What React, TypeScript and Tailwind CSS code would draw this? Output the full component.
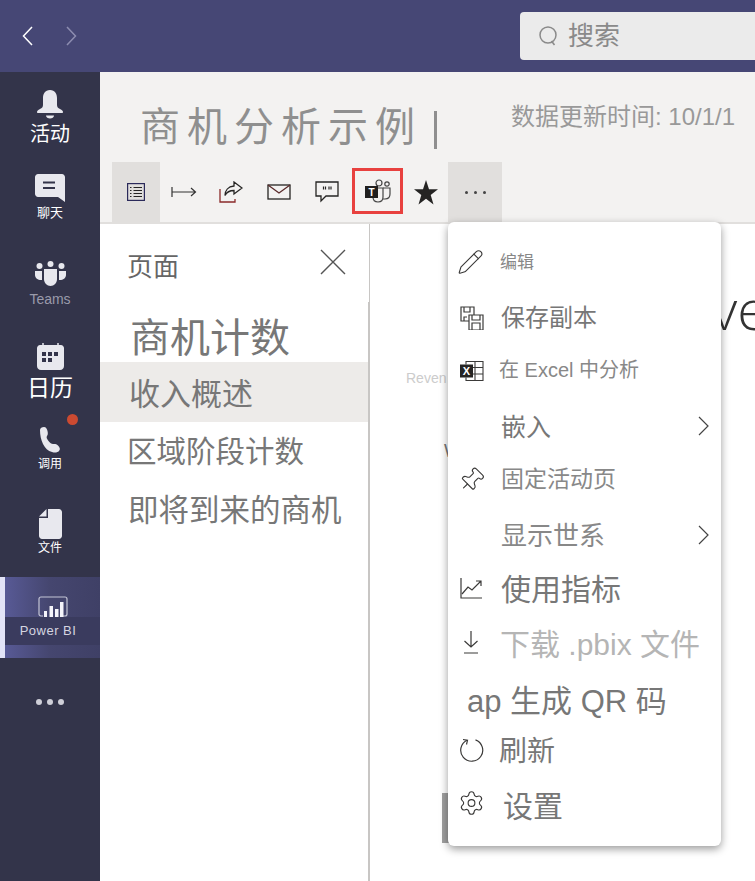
import React from 'react';
import { ChevronRight, Pencil, Pin, Settings } from 'lucide-react';

// Rail icons
const BellIcon = () => (
  <svg width="28" height="30" viewBox="0 0 28 30" fill="#e8e8ee">
    <path d="M14 1c-5 0-7 4-7 8v7c0 2-1 3-3 4-2 1-3 2-3 3 0 .6.4 1 1 1h24c.6 0 1-.4 1-1 0-1-1-2-3-3-2-1-3-2-3-4V9c0-4-2-8-7-8z" />
    <path d="M10 26.500h8c0 2-2 3-4 3s-4-1-4-3z" />
  </svg>
);

const ChatIcon = () => (
  <svg width="30" height="28" viewBox="0 0 30 28">
    <path d="M3 0h24c1.500 0 3 1.500 3 3v25l-7-5H3c-1.500 0-3-1.500-3-3V3c0-1.500 1.500-3 3-3z" fill="#e8e8ee" />
    <path d="M8 8.500h12M8 14h12" stroke="#33344a" strokeWidth="2" />
  </svg>
);

const TeamsIcon = () => (
  <svg width="31" height="25" viewBox="0 0 31 25" fill="#e8e8ee">
    <circle cx="4.500" cy="5" r="3" />
    <circle cx="15.500" cy="3" r="3" />
    <circle cx="26.500" cy="5" r="3" />
    <path d="M0 10h7v9h-1c-3 0-6-2-6-5zM24 10h7v4c0 3-3 5-6 5h-1z" />
    <path d="M9 8h13v10c0 4-3 7-6.500 7S9 22 9 18z" />
  </svg>
);

const CalendarIcon = () => (
  <svg width="27" height="27" viewBox="0 0 27 27">
    <path d="M3 2h21c1.500 0 3 1.500 3 3v18c0 2-1.500 4-4 4H4c-2.500 0-4-2-4-4V5c0-1.500 1.500-3 3-3z" fill="#e8e8ee" />
    <path d="M6 0v3M21 0v3" stroke="#e8e8ee" strokeWidth="1.500" />
    <path d="M5 9h4v4H5zM11 9h4v4h-4zM17 9h4v4h-4zM5 15h4v4H5zM11 15h4v4h-4z" fill="#33344a" />
  </svg>
);

const PhoneIcon = () => (
  <svg width="22" height="26" viewBox="0 0 22 26" fill="#e8e8ee">
    <path d="M1 3c0-2 2-3 4-3 2 0 3 2 3.500 4 .5 2 .5 4-.5 5-1 1 0 3 1.500 5 1.500 2 3 3 4.500 3 1.500 0 3-.5 5 1.500 2 2 2.500 4 1 5.500-1.500 1.500-4 2-7 1-4-1-7-4-9-8C2 13 1 8 1 3z" />
  </svg>
);

const FileIcon = () => (
  <svg width="23" height="30" viewBox="0 0 23 30">
    <path d="M9 0h11c1.500 0 3 1.500 3 3v24c0 1.500-1.500 3-3 3H3c-1.500 0-3-1.500-3-3V9h9z" fill="#e8e8ee" />
    <path d="M7.500 0v7.500H0z" fill="#e8e8ee" />
  </svg>
);

const PowerBiIcon = () => (
  <svg width="30" height="21" viewBox="0 0 30 21" fill="none" className="shrink-0">
    <path d="M5 20H3c-1.200 0-2-.8-2-2V3c0-1.200.8-2 2-2h24c1.200 0 2 .8 2 2v15c0 1.200-.8 2-2 2h-2" stroke="#c4c5d6" strokeWidth="1.200" />
    <path d="M6 15h3v6H6zM11.500 10h3.500v11h-3.500zM17 13h3.500v8H17zM22 6h3.500v15H22z" fill="#f4f4fa" />
  </svg>
);

// Toolbar icons
const PagesIcon = () => (
  <svg width="20" height="20" viewBox="0 0 20 20" fill="none" stroke="#252423" strokeWidth="1.200">
    <rect x="1.600" y="1.600" width="16.800" height="16.800" stroke="#2b2a5a" />
    <path d="M4 5.500h1.500M7.500 5.500H16M4 8.500h1.500M7.500 8.500H16M4 11.500h1.500M7.500 11.500H16M4 14.500h1.500M7.500 14.500H16" />
  </svg>
);

const ExportIcon = () => (
  <svg width="26" height="12" viewBox="0 0 26 12" fill="none" stroke="#333" strokeWidth="1.200">
    <path d="M1 1v10M1 6h23M20 2l4.500 4-4.500 4" />
  </svg>
);

const ShareIcon = () => (
  <svg width="24" height="22" viewBox="0 0 24 22" fill="none" stroke="#252423" strokeWidth="1.300">
    <path d="M1 8v13h15v-3" stroke="#8a2a2a" />
    <path d="M15 1l8 6-8 6V9.500c-4 0-7 1-9 5 0-5 3-9 9-9.500z" />
  </svg>
);

const MailIcon = () => (
  <svg width="24" height="16" viewBox="0 0 24 16" fill="none" stroke="#252423" strokeWidth="1.300">
    <rect x="1" y="1" width="22" height="14" />
    <path d="M1 1l11 8 11-8" stroke="#5a2a2a" />
  </svg>
);

const CommentIcon = () => (
  <svg width="24" height="22" viewBox="0 0 24 22" fill="none" stroke="#252423" strokeWidth="1.300">
    <path d="M1 1h22v14H11l-5 5v-5H1z" />
    <path d="M8.500 5.500v3M10.500 5.500v3M14 5.500v3M16 5.500v3" strokeWidth="1.200" />
  </svg>
);

const TeamsLogo = () => (
  <svg width="26" height="24" viewBox="0 0 26 24" fill="none">
    <circle cx="14" cy="4" r="3" stroke="#444" strokeWidth="1.200" />
    <circle cx="22" cy="5" r="2.200" stroke="#444" strokeWidth="1.200" />
    <path d="M8 9h10v9c0 3-2 5-5 5s-5-2-5-5z" stroke="#444" strokeWidth="1.200" />
    <path d="M18 9h7v6c0 3-2 5-5 5h-2" stroke="#444" strokeWidth="1.200" />
    <rect x="0" y="7" width="13" height="12" fill="#201f1e" />
    <text x="6.500" y="16.500" textAnchor="middle" fontSize="10" fontWeight="700" fill="#fff" fontFamily="Liberation Sans">T</text>
  </svg>
);

const StarIcon = () => (
  <svg width="24" height="25" viewBox="0 0 24 25" fill="#252423">
    <path d="M12 0l3 9.200h9l-7.300 5.800 2.800 9.500L12 18.800 4.500 24.500 7.300 15 0 9.200h9z" />
  </svg>
);

// Menu icons
const SaveCopyIcon = () => (
  <svg width="24" height="24" viewBox="0 0 24 24" fill="none" stroke="#3b3a39" strokeWidth="1.200">
    <path d="M9 15H1V1h13v8" />
    <path d="M4 1v5h6V1M4 15v-4h3" />
    <path d="M9 9h14v15H9z" />
    <path d="M12 9v5h8V9M12 24v-7h8v7" />
  </svg>
);

const ExcelIcon = () => (
  <svg width="24" height="21" viewBox="0 0 24 21" fill="none" stroke="#3b3a39" strokeWidth="1.100">
    <path d="M6 4V1h17v19H6v-3M13 7h10M13 13.500h10M15 1v19" />
    <rect x="0" y="4" width="13" height="13" fill="#252423" stroke="none" />
    <text x="6.500" y="14.500" textAnchor="middle" fontSize="11" fontWeight="700" fill="#fff" stroke="none" fontFamily="Liberation Sans">X</text>
  </svg>
);

const MetricsIcon = () => (
  <svg width="23" height="22" viewBox="0 0 23 22" fill="none" stroke="#3b3a39" strokeWidth="1.200">
    <path d="M1 1v20h21" />
    <path d="M2 17l6-7 4 3 9-9M16 4h5v5" />
  </svg>
);

const DownloadIcon = () => (
  <svg width="16" height="24" viewBox="0 0 16 24" fill="none" stroke="#3b3a39" strokeWidth="1.200">
    <path d="M8 1v16M1.500 11L8 17l6.500-6M1 23h14" />
  </svg>
);

const RefreshIcon = () => (
  <svg width="25" height="25" viewBox="0 0 25 25" fill="none" stroke="#3b3a39" strokeWidth="1.200">
    <path d="M8 2.800a11 11 0 1 0 8.500-.4" />
    <path d="M4 2l4.500.8L7.500 7" />
  </svg>
);

const menuItems = [
  { label: '编辑', row: 'h-[52px]', text: 'text-[17px] text-[#888]', pad: 'pl-[52px]', iconPos: 'left-[9px]', icon: <Pencil size={27} strokeWidth={1} color="#3b3a39" /> },
  { label: '保存副本', row: 'h-[60px]', text: 'text-[24px] text-[#777]', pad: 'pl-[53px]', iconPos: 'left-[12px]', icon: <SaveCopyIcon /> },
  { label: '在 Excel 中分析', row: 'h-[44px]', text: 'text-[20px] text-[#888]', pad: 'pl-[51px]', iconPos: 'left-[12px] mt-px', icon: <ExcelIcon /> },
  { label: '嵌入', row: 'h-[70px]', text: 'text-[25px] text-[#777]', pad: 'pl-[53px]', more: true },
  { label: '固定活动页', row: 'h-[34px]', text: 'text-[23px] text-[#888]', pad: 'pl-[53px]', iconPos: 'left-[10px] mt-px', icon: <Pin size={27} strokeWidth={1} color="#3b3a39" className="rotate-45" /> },
  { label: '显示世系', row: 'h-[80px]', text: 'text-[26px] text-[#888]', pad: 'pl-[53px]', more: true },
  { label: '使用指标', row: 'h-[28px]', text: 'text-[30px] text-[#777]', pad: 'pl-[53px]', iconPos: 'left-[12px] -mt-[2px]', icon: <MetricsIcon /> },
  { label: '下载 .pbix 文件', row: 'h-[82px]', text: 'text-[30px] text-[#b5b5b5]', pad: 'pl-[52px]', iconPos: 'left-[15px] -mt-[3px]', icon: <DownloadIcon /> },
  { label: 'ap 生成 QR 码', row: 'h-[30px]', text: 'text-[31px] text-[#777]', pad: 'pl-[19px]' },
  { label: '刷新', row: 'h-[72px]', text: 'text-[28px] text-[#777]', pad: 'pl-[51px]', iconPos: 'left-[11px] -mt-[2px]', icon: <RefreshIcon /> },
  { label: '设置', row: 'h-[38px]', text: 'text-[30px] text-[#777]', pad: 'pl-[55px]', iconPos: 'left-[10px] -mt-[4px]', icon: <Settings size={27} strokeWidth={1} color="#3b3a39" /> },
];

const App: React.FC = () => {
  return (
    <div className="relative w-[755px] h-[881px] overflow-hidden bg-white [font-family:'Liberation_Sans','Noto_Sans_CJK_SC',sans-serif]">
      {/* Top bar */}
      <div className="flex items-center h-[72px] bg-[#464775]">
        <div className="flex items-center w-[520px] pl-[22px] gap-[33px]">
          <svg width="11" height="20" viewBox="0 0 11 20" fill="none" stroke="#ffffff" strokeWidth="1.500"><path d="M10 1L1.500 10l8.500 9" /></svg>
          <svg width="11" height="20" viewBox="0 0 11 20" fill="none" stroke="#8d8db0" strokeWidth="1.500"><path d="M1 1l8.500 9L1 19" /></svg>
        </div>
        <div className="flex items-center flex-1 h-[48px] pl-[19px] gap-[11px] rounded-l bg-[#ebebeb]">
          <svg width="18" height="20" viewBox="0 0 18 20" fill="none" stroke="#8a8a8a" strokeWidth="1.500">
            <circle cx="9" cy="9" r="8" />
            <path d="M12.500 15l3 4" />
          </svg>
          <span className="text-[26px] leading-none text-[#8a8a8a]">搜索</span>
        </div>
      </div>

      <div className="flex h-[809px]">
        {/* Left rail */}
        <nav className="w-[100px] shrink-0 bg-[#33344a] text-white">
          <div className="flex flex-col items-center h-[88px] pt-[17px]">
            <BellIcon />
            <span className="mt-px text-[20px] leading-[28px]">活动</span>
          </div>
          <div className="flex flex-col items-center h-[88px] pt-[14px]">
            <ChatIcon />
            <span className="mt-[3px] text-[13px] leading-[16px]">聊天</span>
          </div>
          <div className="flex flex-col items-center h-[86px] pt-[13px]">
            <TeamsIcon />
            <span className="mt-[4px] text-[14px] leading-[18px] text-[#9a9aaa]">Teams</span>
          </div>
          <div className="flex flex-col items-center h-[84px] pt-[9px]">
            <CalendarIcon />
            <span className="mt-[3px] text-[23px] leading-[30px]">日历</span>
          </div>
          <div className="relative flex flex-col items-center h-[82px] pt-[9px]">
            <span className="absolute left-[67px] top-[-4px] w-[11px] h-[11px] rounded-full bg-[#cc4a31]" />
            <PhoneIcon />
            <span className="mt-[3px] text-[12px] leading-[16px]">调用</span>
          </div>
          <div className="flex flex-col items-center h-[77px] pt-[9px]">
            <FileIcon />
            <span className="mt-px text-[12px] leading-[16px]">文件</span>
          </div>
          <div className="flex h-[81px] bg-gradient-to-r from-[#5a5c9a] via-[#45466f] to-[#3f4066]">
            <div className="w-[5px] bg-[#e2e3f7]" />
            <div className="flex flex-col flex-1 items-center pt-[19px]">
              <PowerBiIcon />
              <div className="flex justify-center items-center w-full h-[28px] pr-[9px] bg-[#3a3b5e]">
                <span className="text-[13px] tracking-[0.5px] text-[#d5d5e0]">Power BI</span>
              </div>
            </div>
          </div>
          <div className="flex justify-center gap-[5px] pt-[41px]">
            <span className="w-[6px] h-[6px] rounded-full bg-[#cfcfd8]" />
            <span className="w-[6px] h-[6px] rounded-full bg-[#cfcfd8]" />
            <span className="w-[6px] h-[6px] rounded-full bg-[#cfcfd8]" />
          </div>
        </nav>

        <div className="flex flex-col flex-1 min-w-0">
          {/* Report header */}
          <header className="h-[152px] shrink-0 bg-[#f3f2f1] border-b-2 border-[#e1dfdd]">
            <div className="flex h-[90px]">
              <div className="flex items-center h-[110px] pl-[40px] w-[411px]">
                <span className="text-[40px] tracking-[7px] leading-none text-[#8f8f8f]">商机分析示例</span>
                <span className="ml-[12px] w-[3px] h-[38px] mt-[6px] bg-[#8f8f8f]" />
              </div>
              <div className="pt-[30px] text-[24px] leading-[30px] text-[#999] whitespace-nowrap">数据更新时间: 10/1/1</div>
            </div>
            <div className="flex items-stretch h-[60px] pl-[12px]">
              <div className="flex items-center justify-center w-[48px] bg-[#e1dfdd]"><PagesIcon /></div>
              <div className="flex items-center justify-center w-[48px]"><ExportIcon /></div>
              <div className="flex items-center justify-center w-[46px]"><ShareIcon /></div>
              <div className="flex items-center justify-center w-[50px]"><MailIcon /></div>
              <div className="flex items-center justify-center w-[46px]"><CommentIcon /></div>
              <div className="flex items-center justify-center w-[51px] h-[46px] mt-[6px] ml-[2px] border-[3px] border-[#e8413f]"><TeamsLogo /></div>
              <div className="flex items-center justify-center w-[45px]"><StarIcon /></div>
              <div className="flex items-center justify-center gap-[6px] w-[54px] bg-[#e1dfdd]">
                <span className="w-[3px] h-[3px] rounded-full bg-[#444]" />
                <span className="w-[3px] h-[3px] rounded-full bg-[#444]" />
                <span className="w-[3px] h-[3px] rounded-full bg-[#444]" />
              </div>
            </div>
          </header>

          <div className="flex flex-1 min-h-0">
            {/* Pages pane */}
            <aside className="flex flex-col w-[270px] shrink-0">
              <div className="flex items-center justify-between h-[78px] pt-[8px] pl-[27px] pr-[23px] border-r border-[#c8c6c4]">
                <span className="text-[26px] leading-none text-[#666]">页面</span>
                <svg width="26" height="26" viewBox="0 0 26 26" fill="none" stroke="#555" strokeWidth="1.400" className="-mt-[10px]">
                  <path d="M1 1l24 24M25 1L1 25" />
                </svg>
              </div>
              <div className="flex-1 pt-[6px] border-r-2 border-[#c8c6c4]">
                <div className="flex items-center h-[54px] pt-[6px] pl-[30px] text-[40px] leading-none text-[#777]">商机计数</div>
                <div className="flex items-center h-[60px] pt-[4px] pl-[29px] bg-[#edebe9] text-[31px] leading-none text-[#777]">收入概述</div>
                <div className="flex items-center h-[58px] pt-[2px] pl-[27px] text-[29.5px] leading-none text-[#777]">区域阶段计数</div>
                <div className="flex items-center h-[56px] pt-[4px] pl-[28px] text-[30.500px] leading-none text-[#777]">即将到来的商机</div>
              </div>
            </aside>

            {/* Report canvas, mostly under the menu */}
            <main className="flex-1 min-w-0 overflow-hidden">
              <div className="flex justify-end h-[104px] pt-[56px] -mr-[13px] [font-family:'Open_Sans',sans-serif] text-[56px] font-light text-[#333] leading-none">ve</div>
              <div className="mt-[41px] pl-[36px] text-[14px] leading-[18px] text-[#ccc]">Reven</div>
              <div className="mt-[54px] pl-[74px] text-[18px] leading-[20px] text-[#777]">W</div>
              <div className="ml-[72px] mt-[332px] w-[7px] h-[50px] bg-[#a0a0a0]" />
            </main>
          </div>
        </div>
      </div>

      {/* More options menu */}
      <div className="absolute left-[448px] top-[222px] w-[273px] h-[624px] pt-[14px] rounded-md bg-white shadow-[0_3px_8px_rgba(0,0,0,0.4)]">
        {menuItems.map((item, index) => (
          <div key={index} className={`relative flex items-center ${item.row} ${item.pad}`}>
            {item.icon && (
              <span className={`absolute top-1/2 -translate-y-1/2 flex ${item.iconPos}`}>{item.icon}</span>
            )}
            <span className={`leading-none whitespace-nowrap ${item.text}`}>{item.label}</span>
            {item.more && (
              <svg width="11" height="20" viewBox="0 0 11 20" fill="none" stroke="#444" strokeWidth="1.200" className="absolute right-[12px] top-1/2 -translate-y-1/2 -mt-px">
                <path d="M1 1l9 9-9 9" />
              </svg>
            )}
          </div>
        ))}
      </div>
    </div>
  );
};

export default App;
